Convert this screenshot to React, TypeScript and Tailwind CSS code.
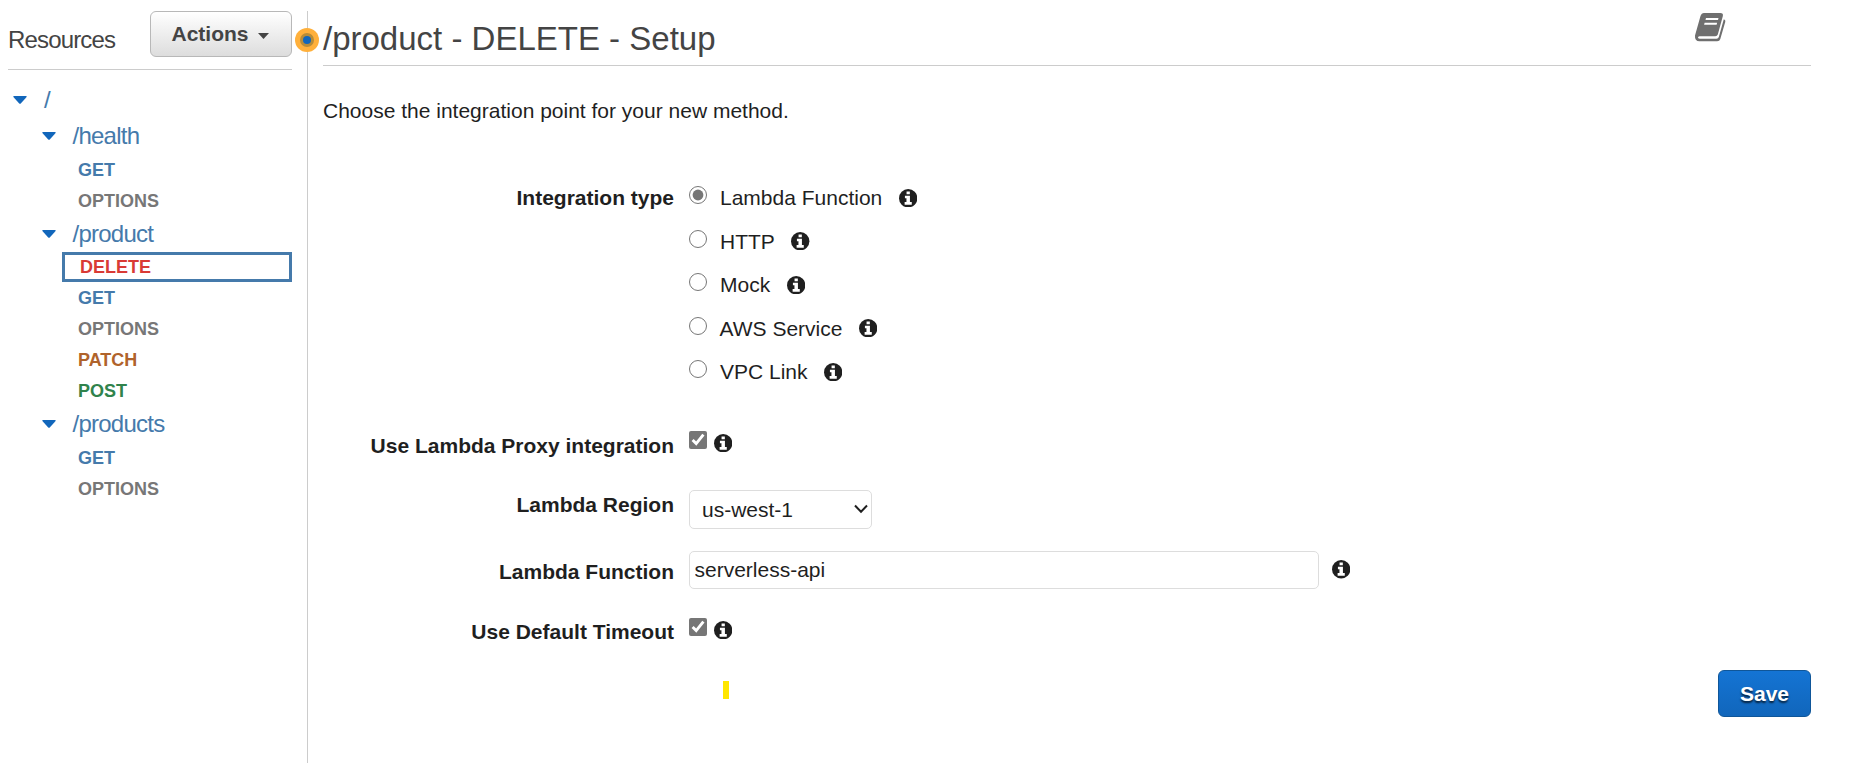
import React from "react";

type Method = "GET" | "OPTIONS" | "DELETE" | "PATCH" | "POST";

const methodColors: Record<Method, string> = {
  GET: "text-[#457aab]",
  OPTIONS: "text-[#777777]",
  DELETE: "text-[#d93a35]",
  PATCH: "text-[#b0632b]",
  POST: "text-[#30834c]",
};

const resources: { path: string; methods: Method[] }[] = [
  { path: "/health", methods: ["GET", "OPTIONS"] },
  { path: "/product", methods: ["DELETE", "GET", "OPTIONS", "PATCH", "POST"] },
  { path: "/products", methods: ["GET", "OPTIONS"] },
];

function InfoIcon({ className = "" }: { className?: string }) {
  return (
    <svg viewBox="0 0 18 18" className={`size-[18.4px] shrink-0 ${className}`}>
      <circle cx="9" cy="9" r="9" fill="#1f1f1f" />
      <path fill="#ffffff" d="M7.4 2.4H10.6V5.2H7.4ZM5.8 6.6H10.7V12.8H12.5V15.4H5.5V12.8H7.3V9.1H5.8Z" />
    </svg>
  );
}

function BookIcon({ className = "" }: { className?: string }) {
  return (
    <svg viewBox="0 0 32 30" className={`h-[30px] w-8 shrink-0 fill-[#6f6f6f] ${className}`}>
      <path
        fillRule="evenodd"
        d="M10 1H26.3Q29.6 1 28.8 4.2L23.8 22.5Q23.2 24.3 21.3 24.3H5.5Q3.8 24.4 4 25.6Q4.3 26.8 6 26.8H22.5Q24.3 26.8 24.8 25L29.8 7.2Q31.8 7.8 31.3 9.8L26.3 27Q25.6 29.3 23.2 29.3H5.5Q.5 29.3 1 23.5L6.5 4Q7.5 1 10 1ZM12 6L11.5 8H24L24.5 6ZM10.6 10.7L10.1 12.7H22.6L23.1 10.7Z"
      />
    </svg>
  );
}

function TreeCaret() {
  return (
    <svg viewBox="0 0 14 8" className="mt-[14px] h-2 w-3.5 shrink-0 fill-[#1166bb]">
      <path d="M1 0H13Q14.2 .4 13.4 1.3L8 7.3Q7 8.4 6 7.3L.6 1.3Q-.2 .4 1 0Z" />
    </svg>
  );
}

function ResourceRow({ path, root = false }: { path: string; root?: boolean }) {
  return (
    <div className={`flex h-9 ${root ? "pl-[5px]" : "pl-[33.5px]"}`}>
      <TreeCaret />
      <a className="ml-[17px] pt-1 text-[24px] leading-[28px] tracking-[-0.75px] text-[#457aab]">{path}</a>
    </div>
  );
}

function MethodRow({ method, selected }: { method: Method; selected: boolean }) {
  return selected ? (
    <div className="ml-[54px] h-[30px] border-3 border-[#457aab] pt-[2px] pl-[15px]">
      <a className={`block text-[18px] leading-[20px] font-bold ${methodColors[method]}`}>{method}</a>
    </div>
  ) : (
    <div className="h-[31px] pt-[6px] pl-[70px]">
      <a className={`block text-[18px] leading-[20px] font-bold ${methodColors[method]}`}>{method}</a>
    </div>
  );
}

function Sidebar() {
  return (
    <aside className="w-[307px] shrink-0 pt-[11px] pl-2">
      <div className="w-[284px]">
        <div className="flex h-[59px] justify-between border-b border-[#cccccc]">
          <h2 className="pt-[15px] text-[24px] leading-[28px] tracking-[-0.85px] text-[#444444]">Resources</h2>
          <button className="flex h-[46px] w-[142px] rounded-[6px] border border-[#b8b8b8] bg-linear-to-b from-white to-[#dddddd] pt-[10px] pl-[20.5px] text-[21px] leading-6 font-bold text-[#444444]">
            Actions
            <svg viewBox="0 0 11 6" className="mt-[11px] ml-[9.5px] h-1.5 w-[11px] fill-[#444444]">
              <path d="M0 0H11L5.5 6Z" />
            </svg>
          </button>
        </div>
        <nav className="pt-3">
          <ResourceRow path="/" root />
          {resources.map((resource) => (
            <React.Fragment key={resource.path}>
              <ResourceRow path={resource.path} />
              {resource.methods.map((method) => (
                <MethodRow key={method} method={method} selected={method === "DELETE"} />
              ))}
            </React.Fragment>
          ))}
        </nav>
      </div>
    </aside>
  );
}

function Divider() {
  return (
    <div className="relative mt-[11px] w-px shrink-0 bg-[#cccccc]">
      <svg viewBox="0 0 24 24" className="absolute top-[17px] -left-3 size-6">
        <circle cx="12" cy="12" r="12" fill="#ffb03b" />
        <circle cx="12" cy="12" r="7" fill="#b88c38" />
        <circle cx="12" cy="12" r="4" fill="#1166bb" />
      </svg>
    </div>
  );
}

function Label({ children, className = "" }: { children: React.ReactNode; className?: string }) {
  return <div className={`w-[351px] shrink-0 text-right font-bold ${className}`}>{children}</div>;
}

function Check() {
  return <input type="checkbox" defaultChecked className="m-0 size-[18px] shrink-0 accent-[#767676]" />;
}

const integrationTypes = ["Lambda Function", "HTTP", "Mock", "AWS Service", "VPC Link"];

export default function App() {
  return (
    <div className="flex h-[763px] w-full overflow-hidden bg-white font-['Liberation_Sans',Arial,sans-serif] text-[21px] leading-6 text-[#1f1f1f]">
      <Sidebar />
      <Divider />
      <main className="flex min-w-0 flex-1 flex-col pr-[50px] pl-[15px]">
        <header className="mt-[11px] flex h-[55px] shrink-0 justify-between border-b border-[#cccccc] pr-[85px]">
          <h1 className="pt-[9px] text-[33px] leading-[38px] text-[#444444]">/product - DELETE - Setup</h1>
          <BookIcon className="mt-px" />
        </header>
        <p className="h-[120px] shrink-0 pt-[33px]">Choose the integration point for your new method.</p>

        <form className="flex flex-col">
          <div className="flex h-[245px]">
            <Label>Integration type</Label>
            <div className="flex flex-col gap-[19.5px] pl-[15px]">
              {integrationTypes.map((type) => (
                <label key={type} className="flex h-6 items-start">
                  <input
                    type="radio"
                    name="integration"
                    defaultChecked={type === "Lambda Function"}
                    className="m-0 size-[18px] shrink-0 accent-[#767676]"
                  />
                  <span className={type === "AWS Service" ? "pl-[12.5px]" : "pl-[13px]"}>{type}</span>
                  <InfoIcon className="mt-[2.5px] ml-[16.5px]" />
                </label>
              ))}
            </div>
          </div>

          <div className="flex h-[59px]">
            <Label className="pt-[3px]">Use Lambda Proxy integration</Label>
            <div className="flex items-start gap-[7px] pl-[15px]">
              <Check />
              <InfoIcon className="mt-[2.5px]" />
            </div>
          </div>

          <div className="flex h-[61px]">
            <Label className="pt-[3px]">Lambda Region</Label>
            <div className="ml-[15px] flex h-[39px] w-[183px] justify-between rounded-[5px] border border-[#dddddd] pt-[7px] pr-[3px] pl-[12px]">
              <span>us-west-1</span>
              <svg viewBox="0 0 14 10" className="mt-[6px] h-2.5 w-3.5 fill-none stroke-[#1f1f1f] stroke-2">
                <path d="M1 1.5L7 7.8L13 1.5" />
              </svg>
            </div>
          </div>

          <div className="flex h-[67px]">
            <Label className="pt-[9px]">Lambda Function</Label>
            <input
              type="text"
              defaultValue="serverless-api"
              className="ml-[15px] h-[38px] w-[630px] rounded-[5px] border border-[#dddddd] px-[4.5px] py-0"
            />
            <InfoIcon className="mt-[9.3px] ml-[13px]" />
          </div>

          <div className="flex h-[63px]">
            <Label className="pt-[2px]">Use Default Timeout</Label>
            <div className="flex items-start gap-[7px] pl-[15px]">
              <Check />
              <InfoIcon className="mt-[2.8px]" />
            </div>
          </div>
        </form>

        <div className="ml-[400px] h-[18px] w-1.5 shrink-0 bg-[#ffe600]" />
        <div className="-mt-[29px] flex justify-end">
          <button className="h-[47px] w-[93px] rounded-[6px] border border-[#0f5699] bg-linear-to-b from-[#1474d4] to-[#1166bb] font-bold text-white [text-shadow:0_2px_2px_rgba(0,0,0,0.7)]">
            Save
          </button>
        </div>
      </main>
    </div>
  );
}
